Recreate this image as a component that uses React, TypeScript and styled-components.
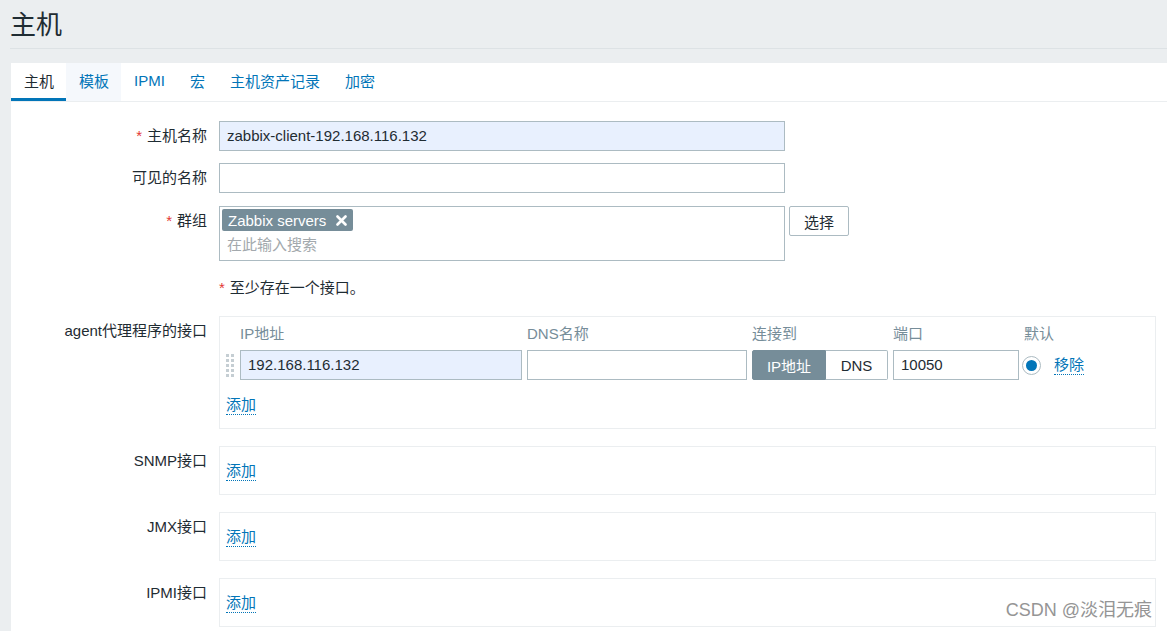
import React from "react";
import styled, { createGlobalStyle } from "styled-components";

const Global = createGlobalStyle`
  html, body { margin: 0; padding: 0; overflow: hidden; }
  body {
    background: #ebeef0;
    font-family: "Liberation Sans", Arial, "Noto Sans CJK SC", sans-serif;
    font-size: 15px;
    color: #1f2c33;
  }
`;

const Page = styled.div`
  position: relative;
  width: 1167px;
  height: 631px;
  overflow: hidden;
`;

const Header = styled.header`
  margin-left: 10px;
  height: 48px;
  border-bottom: 1px solid #dde2e5;
  display: flex;
  align-items: center;
`;

const Title = styled.h1`
  margin: 0;
  font-size: 26px;
  font-weight: normal;
  color: #1f2c33;
  line-height: 30px;
  padding-top: 2px;
`;

const Card = styled.section`
  margin: 14px 0 0 11px;
  background: #fff;
  min-height: 600px;
`;

const TabBar = styled.nav`
  display: flex;
  border-bottom: 1px solid #ebeef0;
  height: 38px;
`;

const Tab = styled.div<{ $active?: boolean; $hover?: boolean }>`
  padding: 0 12px 0 13px;
  display: flex;
  align-items: center;
  height: 38px;
  box-sizing: border-box;
  color: ${(p) => (p.$active ? "#1f2c33" : "#0275b8")};
  background: ${(p) => (p.$hover ? "#f5f8fc" : "transparent")};
  border-bottom: 3px solid ${(p) => (p.$active ? "#0275b8" : "transparent")};
`;

const Form = styled.div`
  padding: 19px 11px 0 0;
  display: flex;
  flex-direction: column;
`;

const Row = styled.div<{ $mt?: number }>`
  display: grid;
  grid-template-columns: 196px 1fr;
  column-gap: 12px;
  margin-top: ${(p) => p.$mt ?? 0}px;
`;

const Label = styled.div`
  text-align: right;
  line-height: 30px;
  white-space: nowrap;
`;

const Req = styled.span`
  color: #e33734;
  margin-right: 5px;
`;

const Field = styled.div`
  display: flex;
  gap: 4px;
  align-items: flex-start;
`;

const TextInput = styled.div<{ $w: number; $fill?: boolean }>`
  width: ${(p) => p.$w}px;
  height: 30px;
  box-sizing: border-box;
  border: 1px solid #acbbc2;
  background: ${(p) => (p.$fill ? "#e8f0fe" : "#fff")};
  padding: 0 7px;
  line-height: 28px;
  white-space: nowrap;
  overflow: hidden;
`;

const Multi = styled.div`
  width: 566px;
  height: 55px;
  box-sizing: border-box;
  border: 1px solid #acbbc2;
  padding: 2px 2px 0;
`;

const TagPill = styled.span`
  display: inline-flex;
  align-items: center;
  gap: 10px;
  height: 22px;
  padding: 0 6px 0 6px;
  background: #768d99;
  color: #fff;
  border-radius: 2px;
`;

const Placeholder = styled.div`
  color: #a3a9ad;
  line-height: 26px;
  padding-left: 5px;
  margin-top: 1px;
`;

const Button = styled.div`
  width: 60px;
  height: 30px;
  box-sizing: border-box;
  border: 1px solid #acbbc2;
  border-radius: 2px;
  background: #fff;
  display: flex;
  align-items: center;
  justify-content: center;
`;

const Note = styled.div`
  line-height: 30px;
`;

const IfaceBox = styled.div`
  border: 1px solid #ebeef0;
  box-sizing: border-box;
  padding: 0 6px;
`;

const IfaceGrid = styled.div`
  display: grid;
  grid-template-columns: 9px 282px 220px 136px 126px auto;
  column-gap: 5px;
  align-items: center;
  padding-top: 5px;
`;

const ColHead = styled.div`
  color: #768d99;
  line-height: 24px;
  margin-bottom: 4px;
`;

const Handle = styled.div`
  display: flex;
  align-items: center;
  height: 30px;
`;

const Toggle = styled.div`
  display: flex;
  height: 30px;
  box-sizing: border-box;
  width: 136px;
`;

const Seg = styled.div<{ $on?: boolean }>`
  flex: ${(p) => (p.$on ? "0 0 74px" : "1")};
  display: flex;
  align-items: center;
  justify-content: center;
  box-sizing: border-box;
  background: ${(p) => (p.$on ? "#768d99" : "#fff")};
  color: ${(p) => (p.$on ? "#fff" : "#1f2c33")};
  border: 1px solid ${(p) => (p.$on ? "#768d99" : "#acbbc2")};
  border-left-width: ${(p) => (p.$on ? 1 : 0)}px;
  border-radius: ${(p) => (p.$on ? "2px 0 0 2px" : "0 2px 2px 0")};
`;

const DefaultCell = styled.div`
  display: flex;
  align-items: center;
  gap: 13px;
  margin-left: -2px;
`;

const Radio = styled.span`
  width: 19px;
  height: 19px;
  box-sizing: border-box;
  border-radius: 50%;
  border: 1px solid #acbbc2;
  display: flex;
  align-items: center;
  justify-content: center;
  &::after {
    content: "";
    width: 11px;
    height: 11px;
    border-radius: 50%;
    background: #0275b8;
  }
`;

const Link = styled.span`
  color: #0275b8;
  border-bottom: 1px dotted #0275b8;
  line-height: 18px;
  display: inline-block;
`;

const AddLine = styled.div<{ $pt: number; $pb: number }>`
  padding: ${(p) => p.$pt}px 0 ${(p) => p.$pb}px 0;
`;

const Watermark = styled.div`
  position: absolute;
  right: 15px;
  bottom: 10px;
  font-size: 18px;
  color: #8a8a8a;
  opacity: 0.9;
`;

const Cross = () => (
  <svg width="11" height="11" viewBox="0 0 11 11">
    <path d="M1.5 1.5 L9.5 9.5 M9.5 1.5 L1.5 9.5" stroke="#fff" strokeWidth="2.6" strokeLinecap="round" />
  </svg>
);

const Grip = () => (
  <svg width="9" height="23" viewBox="0 0 9 23">
    {[0, 1, 2, 3, 4].flatMap((r) =>
      [0, 1].map((c) => (
        <rect key={`${r}-${c}`} x={c * 5} y={r * 5} width="3" height="3" fill="#c5ced3" />
      ))
    )}
  </svg>
);

export default function App() {
  return (
    <Page>
      <Global />
      <Header>
        <Title>主机</Title>
      </Header>
      <Card>
        <TabBar>
          <Tab $active>主机</Tab>
          <Tab $hover>模板</Tab>
          <Tab>IPMI</Tab>
          <Tab>宏</Tab>
          <Tab>主机资产记录</Tab>
          <Tab>加密</Tab>
        </TabBar>
        <Form>
          <Row>
            <Label>
              <Req>*</Req>主机名称
            </Label>
            <Field>
              <TextInput $w={566} $fill>
                zabbix-client-192.168.116.132
              </TextInput>
            </Field>
          </Row>
          <Row $mt={12}>
            <Label>可见的名称</Label>
            <Field>
              <TextInput $w={566} />
            </Field>
          </Row>
          <Row $mt={13}>
            <Label>
              <Req>*</Req>群组
            </Label>
            <Field>
              <Multi>
                <TagPill>
                  Zabbix servers <Cross />
                </TagPill>
                <Placeholder>在此输入搜索</Placeholder>
              </Multi>
              <Button>选择</Button>
            </Field>
          </Row>
          <Row $mt={12}>
            <Label />
            <Note>
              <Req>*</Req>至少存在一个接口。
            </Note>
          </Row>
          <Row $mt={13}>
            <Label>agent代理程序的接口</Label>
            <IfaceBox>
              <IfaceGrid>
                <div />
                <ColHead>IP地址</ColHead>
                <ColHead>DNS名称</ColHead>
                <ColHead>连接到</ColHead>
                <ColHead>端口</ColHead>
                <ColHead>默认</ColHead>
                <Handle>
                  <Grip />
                </Handle>
                <TextInput $w={282} $fill>
                  192.168.116.132
                </TextInput>
                <TextInput $w={220} />
                <Toggle>
                  <Seg $on>IP地址</Seg>
                  <Seg>DNS</Seg>
                </Toggle>
                <TextInput $w={126}>10050</TextInput>
                <DefaultCell>
                  <Radio />
                  <Link>移除</Link>
                </DefaultCell>
              </IfaceGrid>
              <AddLine $pt={16} $pb={13}>
                <Link>添加</Link>
              </AddLine>
            </IfaceBox>
          </Row>
          <Row $mt={17}>
            <Label>SNMP接口</Label>
            <IfaceBox>
              <AddLine $pt={15} $pb={13}>
                <Link>添加</Link>
              </AddLine>
            </IfaceBox>
          </Row>
          <Row $mt={17}>
            <Label>JMX接口</Label>
            <IfaceBox>
              <AddLine $pt={15} $pb={13}>
                <Link>添加</Link>
              </AddLine>
            </IfaceBox>
          </Row>
          <Row $mt={17}>
            <Label>IPMI接口</Label>
            <IfaceBox>
              <AddLine $pt={15} $pb={13}>
                <Link>添加</Link>
              </AddLine>
            </IfaceBox>
          </Row>
        </Form>
      </Card>
      <Watermark>CSDN @淡泪无痕</Watermark>
    </Page>
  );
}
